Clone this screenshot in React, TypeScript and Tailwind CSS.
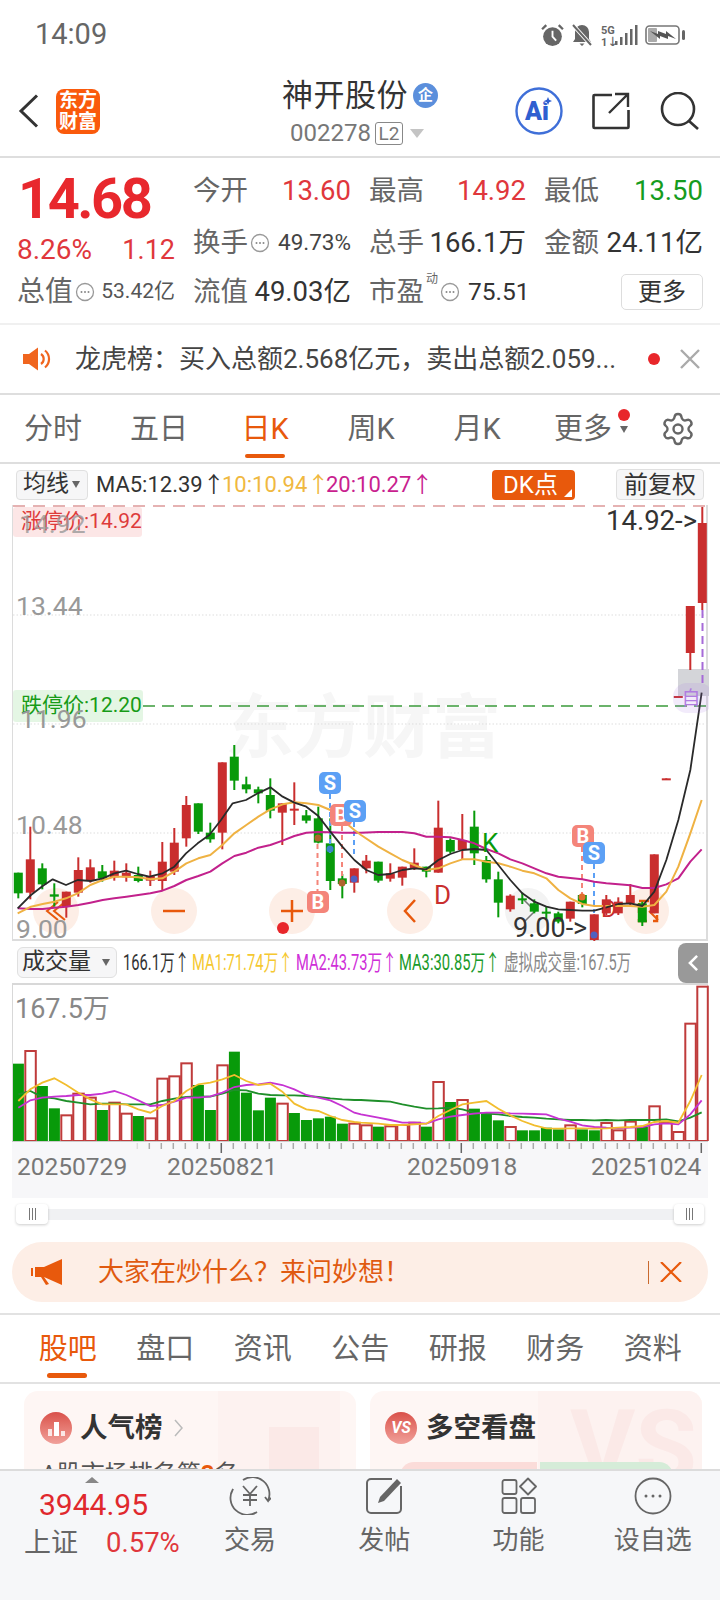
import { Settings } from "lucide-react";

type Candle = [number, number, number, number, number];

const RED = "#c92e2e";
const GREEN = "#089a0a";

// [up?, bodyTop, bodyBottom, wickTop, wickBottom], y measured from 650 at 3x
const candles: Candle[] = [
  [0, 668, 730, 668, 745], [1, 628, 728, 530, 748], [0, 655, 703, 640, 718], [0, 733, 740, 700, 770],
  [1, 725, 770, 725, 803], [1, 660, 728, 622, 740], [1, 652, 690, 628, 698], [0, 664, 685, 645, 695],
  [1, 662, 682, 632, 692], [1, 668, 682, 640, 695], [0, 675, 693, 650, 697], [1, 678, 692, 662, 708],
  [1, 635, 693, 576, 720], [1, 578, 665, 534, 675], [1, 465, 565, 438, 590], [0, 460, 545, 460, 552],
  [0, 548, 568, 518, 578], [1, 337, 548, 337, 598], [0, 320, 392, 285, 420], [0, 403, 418, 380, 430],
  [0, 418, 430, 410, 460], [0, 435, 482, 385, 505], [1, 460, 488, 460, 585], [1, 476, 480, 397, 525],
  [0, 496, 512, 480, 520], [0, 505, 578, 470, 580], [0, 580, 693, 505, 720], [0, 685, 702, 672, 745],
  [1, 655, 698, 655, 728], [1, 632, 655, 615, 670], [0, 635, 692, 635, 698], [1, 670, 686, 640, 695],
  [1, 650, 683, 650, 707], [1, 638, 655, 595, 660], [0, 650, 665, 650, 682], [1, 533, 668, 452, 668],
  [0, 570, 605, 565, 610], [1, 570, 600, 492, 628], [0, 530, 610, 482, 645], [0, 630, 688, 618, 698],
  [0, 688, 758, 665, 802], [1, 737, 778, 733, 785], [0, 745, 748, 728, 762], [0, 760, 785, 748, 790],
  [0, 785, 788, 770, 810], [0, 790, 815, 785, 820], [1, 755, 806, 755, 815], [0, 735, 762, 735, 772],
  [1, 793, 870, 793, 875], [1, 748, 790, 735, 795], [1, 755, 790, 742, 795], [1, 735, 760, 702, 770],
  [0, 760, 817, 755, 828], [1, 613, 790, 613, 790], [1, 385, 390, 385, 390], [1, 138, 142, 138, 142],
  [1, -132, 9, -132, 60], [1, -381, -141, -429, -120],
];

const ma5 = "50,775 90,735 125,708 155,688 195,705 230,690 270,693 305,685 340,670 375,662 410,672 445,680 485,670 520,650 555,610 590,580 625,555 660,510 695,460 735,450 770,430 808,412 845,440 880,458 916,470 952,498 988,545 1024,590 1060,630 1096,660 1132,675 1168,672 1204,660 1240,655 1276,658 1312,630 1348,612 1384,600 1420,597 1456,600 1492,645 1528,690 1564,730 1600,755 1636,770 1672,778 1708,780 1744,782 1780,782 1816,772 1852,762 1888,760 1924,768 1960,725 1996,630 2032,510 2068,360 2102,128";
const ma10 = "50,790 90,770 125,762 160,755 195,745 230,730 268,705 305,690 340,680 375,680 412,682 448,688 484,685 520,665 556,640 592,625 628,615 664,585 700,550 736,525 772,500 808,478 845,463 880,457 916,460 952,465 988,480 1024,510 1060,540 1080,555 1132,590 1168,610 1204,630 1240,645 1276,660 1312,655 1348,640 1384,628 1420,628 1456,635 1492,640 1528,650 1564,662 1600,670 1636,685 1672,720 1708,745 1744,762 1780,768 1816,768 1852,768 1888,768 1924,770 1960,765 1996,725 2032,650 2068,550 2102,450";
const ma20 = "50,775 90,777 125,777 160,773 195,770 232,765 268,758 305,750 340,745 376,740 412,735 448,730 484,722 520,708 556,690 592,678 628,665 664,640 700,618 736,608 772,593 808,585 845,572 880,558 916,548 952,546 988,547 1024,548 1060,548 1080,548 1132,546 1168,546 1204,546 1240,550 1276,560 1312,560 1348,562 1384,570 1420,580 1456,597 1492,610 1528,628 1564,640 1600,655 1636,670 1672,680 1708,684 1744,688 1780,695 1816,700 1852,703 1888,706 1924,714 1960,714 1996,703 2032,685 2068,635 2102,598";

const vol = [
  [0, 368], [1, 330], [0, 435], [0, 502], [1, 523], [1, 458], [1, 470], [0, 507], [1, 485], [1, 518],
  [0, 525], [1, 532], [1, 413], [1, 406], [1, 367], [0, 432], [0, 507], [1, 373], [0, 332], [0, 455],
  [0, 508], [0, 470], [1, 488], [0, 516], [0, 537], [0, 532], [0, 527], [0, 548], [1, 548], [1, 553],
  [0, 557], [1, 556], [1, 552], [1, 545], [0, 557], [1, 423], [0, 483], [1, 477], [0, 503], [0, 518],
  [0, 538], [1, 558], [0, 568], [0, 568], [0, 560], [0, 565], [1, 553], [0, 565], [0, 568], [1, 546],
  [1, 568], [1, 542], [0, 557], [1, 496], [1, 545], [1, 573], [1, 248], [1, 137],
];

const vma1 = "52,480 88,445 124,425 160,412 196,432 232,455 268,475 304,490 340,490 376,490 412,505 448,515 484,495 520,480 556,450 592,430 628,425 664,415 700,402 736,420 772,432 808,428 844,452 880,488 916,505 952,510 988,525 1024,537 1060,543 1080,545 1132,548 1168,552 1204,552 1240,550 1276,548 1312,525 1348,507 1384,490 1420,485 1456,480 1492,503 1528,523 1564,540 1600,553 1636,562 1672,563 1708,562 1744,562 1780,563 1816,562 1852,560 1888,558 1924,555 1960,543 1996,540 2032,545 2068,480 2102,402";
const vma2 = "52,500 88,478 124,470 160,467 196,465 232,462 268,462 304,458 340,450 376,462 412,478 448,495 484,492 520,482 556,470 592,470 628,466 664,455 700,438 736,432 772,430 808,425 844,432 880,445 916,462 952,470 988,478 1024,495 1060,515 1080,520 1132,530 1168,537 1204,545 1240,545 1276,548 1312,535 1348,527 1384,522 1420,518 1456,515 1492,515 1528,517 1564,518 1600,519 1636,520 1672,533 1708,542 1744,553 1780,558 1816,560 1852,561 1888,560 1924,558 1960,550 1996,547 2032,550 2068,520 2102,478";
const vma3 = "52,460 88,450 124,468 160,472 196,480 232,485 268,490 304,488 340,488 376,490 412,490 448,490 484,480 520,473 556,468 592,466 628,467 664,458 700,447 736,448 772,458 808,462 844,463 880,463 916,465 952,468 988,472 1024,475 1060,477 1080,477 1132,480 1168,482 1204,490 1240,497 1276,503 1312,502 1348,500 1384,505 1420,515 1456,518 1492,520 1528,525 1564,528 1600,530 1636,533 1672,535 1708,537 1744,537 1780,538 1816,537 1852,538 1888,537 1924,537 1960,537 1996,535 2032,541 2068,530 2102,514";

const Marker = ({ x, y, t, c }: { x: number; y: number; t: string; c: string }) => (
  <g>
    <rect x={x} y={y} width="22" height="22" rx="5" fill={c} />
    <text x={x + 11} y={y + 18} textAnchor="middle" fontSize="20" fontWeight="700" fill="#fff">{t}</text>
  </g>
);

const Dots = () => (
  <svg viewBox="0 0 20 20" className="w-[20px] h-[20px] shrink-0">
    <circle cx="10" cy="10" r="8.5" fill="none" stroke="#999" strokeWidth="1.3" />
    <circle cx="6.5" cy="10" r="1" fill="#888" />
    <circle cx="10" cy="10" r="1" fill="#888" />
    <circle cx="13.5" cy="10" r="1" fill="#888" />
  </svg>
);

function PriceChart() {
  const toX = (x: number) => x / 3;
  const toY = (y: number) => 650 + y / 3;
  const pts = (s: string) =>
    s.split(" ").map((p) => {
      const [a, b] = p.split(",").map(Number);
      return `${toX(a)},${toY(b)}`;
    }).join(" ");
  return (
    <div className="relative shrink-0 h-[436px] ml-[12px] w-[696px] border-l border-r-2 border-b-2 border-[#dcdcdc]">
      <svg viewBox="12 505 696 436" className="absolute inset-0 w-[696px] h-[436px]">
        <text x="224" y="752" fontSize="69" fontWeight="700" fill="#f6f6f6">东方财富</text>
        <line x1="12" x2="708" y1="506" y2="506" stroke="#d99" strokeWidth="1.5" strokeDasharray="12 8" />
        {[615, 724, 833].map((y) => (
          <line key={y} x1="12" x2="708" y1={y} y2={y} stroke="#ddd" strokeDasharray="1.5 2" />
        ))}
        <line x1="142" x2="708" y1="706" y2="706" stroke="#3b9a3b" strokeWidth="1.5" strokeDasharray="12 7" />

        {[55, 173, 291, 409, 645].map((x) => (
          <circle key={x} cx={x} cy="911" r="23" fill="#fdeee6" />
        ))}
        <circle cx="527" cy="911" r="23" fill="#f3f3f3" />
        <path d="M57 902l-11 9 11 9M64 902l-11 9 11 9" fill="none" stroke="#e8590c" strokeWidth="2" />
        <path d="M162 911h22" stroke="#e8590c" strokeWidth="2.5" />
        <path d="M280 911h22M291 900v22" stroke="#e8590c" strokeWidth="2.5" />
        <path d="M414 900l-10 11 10 11" fill="none" stroke="#e8590c" strokeWidth="2.5" />
        <path d="M523 900l11 11-11 11" fill="none" stroke="#777" strokeWidth="1.5" />
        <rect x="638" y="901" width="18" height="20" fill="none" stroke="#e8590c" strokeWidth="2.5" strokeDasharray="10 6" />
        <path d="M648 911l9 9" stroke="#e8590c" strokeWidth="2" />

        <rect x="677" y="669" width="31" height="27" fill="#d4d5d9" />

        {candles.map(([up, bt, bb, wt, wb], i) => {
          const x = 17.3 + 12 * i;
          const c = up ? RED : GREEN;
          const h = Math.max((bb - bt) / 3, 2);
          return (
            <g key={i}>
              <line x1={x} x2={x} y1={toY(wt)} y2={toY(wb)} stroke={c} strokeWidth="2" />
              <rect x={x - 4.5} y={toY(bt)} width="9" height={h} fill={c} />
            </g>
          );
        })}

        <path d="M316.5 844v47M341 826v52" stroke="#f4857a" strokeWidth="2" strokeDasharray="5 4" />
        <path d="M329 794v62M353 822v34" stroke="#5ca0f5" strokeWidth="2" strokeDasharray="5 4" />
        <path d="M581 847v49" stroke="#f4857a" strokeWidth="2" strokeDasharray="5 4" />
        <path d="M593 864v49" stroke="#5ca0f5" strokeWidth="2" strokeDasharray="5 4" />
        <path d="M701.5 610v75" stroke="#a66ad8" strokeWidth="2" strokeDasharray="8 5" />

        <polyline points={pts(ma20)} fill="none" stroke="#c2218c" strokeWidth="2" strokeLinejoin="round" />
        <polyline points={pts(ma10)} fill="none" stroke="#efb243" strokeWidth="2" strokeLinejoin="round" />
        <polyline points={pts(ma5)} fill="none" stroke="#2a2a2a" strokeWidth="1.8" strokeLinejoin="round" />

        <circle cx="317" cy="838" r="3.5" fill="#b0622e" />
        <circle cx="329" cy="849" r="3.5" fill="#3a86c8" />
        <circle cx="341" cy="883" r="3.5" fill="#b0622e" />
        <circle cx="353" cy="879" r="3.5" fill="#5060c0" />
        <circle cx="581" cy="897" r="3.5" fill="#e0702e" />
        <circle cx="593" cy="935" r="3.5" fill="#5060c0" />
        <circle cx="282" cy="928" r="6" fill="#e8262a" />

        <Marker x={306} y={891} t="B" c="#f4857a" />
        <Marker x={329} y={804} t="B" c="#f4857a" />
        <Marker x={318} y={772} t="S" c="#5ca0f5" />
        <Marker x={343} y={800} t="S" c="#5ca0f5" />
        <Marker x={571} y={825} t="B" c="#f4857a" />
        <Marker x={582} y={842} t="S" c="#5ca0f5" />

        <text x="433" y="904" fontSize="26" fill="#c92e2e">D</text>
        <text x="600" y="917" fontSize="24" fill="#c92e2e">D</text>
        <text x="481" y="852" fontSize="26" fill="#089a0a">K</text>
        <text x="512" y="937" fontSize="27" fill="#333">9.00-&gt;</text>
        <text x="605" y="530" fontSize="27.5" fill="#333">14.92-&gt;</text>

        <rect x="672" y="683" width="40" height="30" rx="14" fill="#a070e0" fillOpacity="0.14" />
        <text x="690" y="705" textAnchor="middle" fontSize="19" fill="#b07be0">自</text>
      </svg>

      <div className="absolute left-0 top-[2px] w-[129px] h-[30px] rounded-[3px] bg-[#fbdcdc]/70 flex items-center pl-[8px] text-[21px] text-[#de3b3b] whitespace-nowrap">涨停价:14.92</div>
      <div className="absolute left-0 top-[185px] w-[130px] h-[32px] rounded-[3px] bg-[#d8f2d8]/70 flex items-center pl-[8px] text-[21px] text-[#179b17] whitespace-nowrap">跌停价:12.20</div>

      <span className="absolute left-[3px] top-[85px] text-[26.5px] leading-[32px] text-[#999]">13.44</span>
      <span className="absolute left-[3px] top-[304px] text-[26.5px] leading-[32px] text-[#999]">10.48</span>
      <span className="absolute left-[3px] top-[408px] text-[26.5px] leading-[32px] text-[#999]">9.00</span>
      <span className="absolute left-[7px] top-[198px] text-[26.5px] leading-[32px] text-[#999]">11.96</span>
      <span className="absolute left-[6px] top-[3px] text-[26.5px] leading-[32px] text-[#999]/80">14.92</span>
    </div>
  );
}

function VolumePlot() {
  const toY = (y: number) => 940 + y / 3;
  const pts = (s: string) =>
    s.split(" ").map((p) => {
      const [a, b] = p.split(",").map(Number);
      return `${a / 3},${toY(b)}`;
    }).join(" ");
  return (
    <svg viewBox="12 984 696 156" className="block w-[696px] h-[156px]">
      {vol.map(([up, top], i) => {
        const x = 17.3 + 12 * i;
        const y = toY(top);
        return up ? (
          <rect key={i} x={x - 5} y={y} width="10.5" height={1140 - y} fill="#fff" stroke="#bf3b3b" strokeWidth="2" />
        ) : (
          <rect key={i} x={x - 5.4} y={y} width="11" height={1140 - y} fill={GREEN} />
        );
      })}
      <polyline points={pts(vma3)} fill="none" stroke="#1f8f2a" strokeWidth="1.8" />
      <polyline points={pts(vma2)} fill="none" stroke="#c633d2" strokeWidth="1.8" />
      <polyline points={pts(vma1)} fill="none" stroke="#f2bd2e" strokeWidth="1.8" />
    </svg>
  );
}

export default function App() {
  return (
    <div className="w-[720px] h-[1600px] bg-white flex flex-col overflow-hidden [font-family:Roboto,'Noto_Sans_CJK_SC',sans-serif]">
      {/* status bar */}
      <div className="h-[68px] shrink-0 flex items-center pl-[35px] pr-[34px] pt-[2px] text-[#666]">
        <span className="text-[29px]">14:09</span>
        <div className="ml-auto flex items-center">
          <svg viewBox="0 0 24 24" className="w-[25px] h-[25px]">
            <circle cx="12" cy="13" r="9" fill="#666" />
            <path d="M12 7.5V13l3.5 4" stroke="#fff" strokeWidth="1.8" fill="none" />
            <path d="M2 6l4-4M22 6l-4-4" stroke="#666" strokeWidth="2.2" />
          </svg>
          <svg viewBox="0 0 24 24" className="w-[24px] h-[24px] ml-[5px]">
            <path d="M12 2a7 7 0 0 0-7 7v7l-2 3h18l-2-3V9a7 7 0 0 0-7-7zM9.5 20.5h5L12 23z" fill="#666" />
            <path d="M3 2l18 20" stroke="#fff" strokeWidth="4" />
            <path d="M3 2l18 20" stroke="#666" strokeWidth="2" />
          </svg>
          <svg viewBox="0 0 37 22" className="w-[37px] h-[22px] ml-[7px]">
            <text x="0" y="9.5" fontSize="11" fontWeight="700" fill="#666">5G</text>
            <text x="0" y="21.5" fontSize="11" fontWeight="700" fill="#666">1↓</text>
            <rect x="14" y="17" width="2.5" height="4" fill="#666" />
            <rect x="19" y="13" width="2.5" height="8" fill="#666" />
            <rect x="24" y="9" width="2.5" height="12" fill="#666" />
            <rect x="29" y="5" width="2.5" height="16" fill="#666" />
            <rect x="34" y="1" width="2.5" height="20" fill="#666" />
          </svg>
          <svg viewBox="0 0 41 20" className="w-[41px] h-[20px] ml-[7px]">
            <rect x="1" y="1" width="33" height="18" rx="3.5" fill="none" stroke="#777" strokeWidth="1.6" />
            <rect x="3" y="3" width="9" height="14" rx="1" fill="#aaa" />
            <path d="M5 6l8 3 0-3 8 3 0-3 10 8-8-3 0 3-8-3 0 3z" fill="#555" />
            <rect x="37" y="5" width="3" height="10" rx="1.5" fill="#666" />
          </svg>
        </div>
      </div>

      {/* header */}
      <div className="h-[90px] shrink-0 border-b-2 border-[#dedede] flex items-center pb-[2px]">
        <div className="w-[282px] shrink-0 flex items-center pl-[18px]">
          <svg viewBox="0 0 21 34" className="w-[21px] h-[34px]">
            <path d="M19 1.5L3 17l16 15.5" fill="none" stroke="#333" strokeWidth="3" />
          </svg>
          <div className="ml-[17px] w-[44px] h-[45px] rounded-[8px] bg-[#fa5a0c] text-white text-[19px] leading-[21px] font-bold flex flex-col items-center justify-center">
            <span>东方</span>
            <span>财富</span>
          </div>
        </div>
        <div className="w-[200px] shrink-0 flex flex-col">
          <div className="flex items-center h-[42px]">
            <span className="text-[31px] leading-none text-[#333] tracking-[0.5px]">神开股份</span>
            <span className="ml-[5px] w-[25px] h-[25px] rounded-full bg-[#5b8fdc] text-white text-[15px] font-bold flex items-center justify-center">企</span>
          </div>
          <div className="flex items-center h-[30px] pl-[8px] mt-[2px]">
            <span className="text-[24px] leading-none text-[#777]">002278</span>
            <span className="ml-[4px] w-[28px] h-[23px] rounded-[3px] border border-[#888] text-[19px] leading-none text-[#777] flex items-center justify-center">L2</span>
            <span className="ml-[7px] w-0 h-0 border-x-[7px] border-x-transparent border-t-[9px] border-t-[#c4c4c4]" />
          </div>
        </div>
        <div className="ml-[33px] flex items-center">
          <svg viewBox="0 0 48 48" className="w-[48px] h-[48px]">
            <circle cx="24" cy="24" r="22.5" fill="none" stroke="#3f6fd8" strokeWidth="2.4" />
            <text x="10" y="33" fontSize="25" fontWeight="900" fill="#2f5fd0">Ai</text>
            <path d="M33 11l1.200 2.800L37 15l-2.800 1.200L33 19l-1.200-2.800L29 15l2.800-1.200z" fill="#fff" />
            <path d="M33 10l1.200 2.800L37 14l-2.800 1.200L33 18l-1.200-2.800L29 14l2.800-1.200z" fill="#2f5fd0" />
          </svg>
          <svg viewBox="0 0 38 38" className="w-[38px] h-[38px] ml-[29px]">
            <path d="M20 3H2.500a1 1 0 0 0-1 1v31a1 1 0 0 0 1 1h33a1 1 0 0 0 1-1V18" fill="none" stroke="#333" strokeWidth="2.6" strokeLinejoin="round" />
            <path d="M17 21L35 3M23 2h13v13" fill="none" stroke="#333" strokeWidth="2.4" />
          </svg>
          <svg viewBox="0 0 40 38" className="w-[40px] h-[38px] ml-[30px]">
            <circle cx="18" cy="17" r="16" fill="none" stroke="#333" strokeWidth="2.6" />
            <path d="M29 29l9 8" stroke="#333" strokeWidth="2.6" />
          </svg>
        </div>
      </div>

      {/* quote */}
      <div className="h-[167px] shrink-0 border-b-2 border-[#f0f0f0] flex pt-[5px]">
        <div className="w-[193px] shrink-0 pl-[17px]">
          <div className="h-[72px] flex items-center">
            <span className="text-[56px] leading-none font-bold text-[#e8282d] ml-[1px] tracking-[-2.5px]">14.68</span>
          </div>
          <div className="h-[30px] w-[158px] flex items-center justify-between text-[28px] text-[#e0373c]">
            <span>8.26%</span>
            <span className="text-[27px]">1.12</span>
          </div>
          <div className="h-[54px] w-[158px] flex items-center">
            <span className="text-[28px] text-[#666]">总值</span>
            <span className="ml-[2px]"><Dots /></span>
            <span className="ml-auto text-[21px] text-[#555]">53.42亿</span>
          </div>
        </div>
        <div className="grid grid-cols-[158px_157px_159px] gap-x-[18px] grid-rows-[56px_48px_50px] text-[27.5px] text-[#666] whitespace-nowrap">
          <div className="flex items-center justify-between"><span>今开</span><span className="text-[#e0373c]">13.60</span></div>
          <div className="flex items-center justify-between"><span>最高</span><span className="text-[#e0373c]">14.92</span></div>
          <div className="flex items-center justify-between"><span>最低</span><span className="text-[#169c1e]">13.50</span></div>

          <div className="flex items-center"><span>换手</span><span className="ml-[2px]"><Dots /></span><span className="ml-auto text-[22.5px] text-[#444]">49.73%</span></div>
          <div className="flex items-center justify-between"><span>总手</span><span className="text-[#333]">166.1万</span></div>
          <div className="flex items-center justify-between"><span>金额</span><span className="text-[#333]">24.11亿</span></div>

          <div className="flex items-center justify-between"><span>流值</span><span className="text-[#333]">49.03亿</span></div>
          <div className="flex items-center">
            <span className="shrink-0">市盈</span>
            <span className="text-[12px] mb-[26px] ml-[2px] leading-none">动</span>
            <span className="ml-[2px]"><Dots /></span>
            <span className="ml-[8px] text-[24.5px] text-[#333]">75.51</span>
          </div>
          <div className="flex items-center justify-end">
            <span className="w-[82px] h-[36px] rounded-[5px] border border-[#ddd] text-[24px] text-[#333] flex items-center justify-center">更多</span>
          </div>
        </div>
      </div>

      {/* notice */}
      <div className="h-[70px] shrink-0 border-b-2 border-[#dedede] flex items-center pl-[23px]">
        <svg viewBox="0 0 28 24" className="w-[28px] h-[24px]">
          <path d="M0 7h6l9-6.500v23L6 17H0z" fill="#f0651e" />
          <path d="M18 7a6 6 0 0 1 0 10" fill="none" stroke="#f0651e" strokeWidth="2.200" />
          <path d="M22 3.500a11 11 0 0 1 0 17" fill="none" stroke="#f0651e" strokeWidth="2.200" />
        </svg>
        <span className="ml-[24px] w-[540px] text-[26px] text-[#444] whitespace-nowrap">龙虎榜：买入总额2.568亿元，卖出总额2.059...</span>
        <span className="ml-[33px] w-[12px] h-[12px] rounded-full bg-[#e8262a]" />
        <svg viewBox="0 0 20 20" className="w-[20px] h-[20px] ml-[20px]">
          <path d="M1 1l18 18M19 1L1 19" stroke="#aaa" strokeWidth="2.400" />
        </svg>
      </div>

      {/* period tabs */}
      <div className="h-[69px] shrink-0 border-b-2 border-[#dedede] flex text-[29px] text-[#666]">
        <div className="w-[106px] flex items-center justify-center pt-[3px]">分时</div>
        <div className="w-[106px] flex items-center justify-center pt-[3px]">五日</div>
        <div className="relative w-[106px] flex items-center justify-center pt-[3px] text-[#e8590c]">
          日K
          <span className="absolute left-[33px] bottom-[4px] w-[40px] h-[4px] rounded-full bg-[#e8590c]" />
        </div>
        <div className="w-[106px] flex items-center justify-center pt-[3px]">周K</div>
        <div className="w-[106px] flex items-center justify-center pt-[3px]">月K</div>
        <div className="relative w-[106px] flex items-center justify-center pt-[3px]">
          更多
          <span className="absolute left-[88px] top-[14px] w-[12px] h-[12px] rounded-full bg-[#e8262a]" />
          <span className="absolute left-[90px] top-[31px] w-0 h-0 border-x-[4px] border-x-transparent border-t-[7px] border-t-[#666]" />
        </div>
        <div className="flex-1 flex items-center justify-center">
          <Settings size={36} strokeWidth={1.6} color="#666" />
        </div>
      </div>

      {/* chart toolbar */}
      <div className="h-[41px] shrink-0 flex items-center pl-[16px] pr-[16px] text-[22px]">
        <div className="w-[72px] h-[30px] rounded-[4px] bg-[#f6f6f7] border border-[#e0e0e0] flex items-center pl-[6px] text-[#333] text-[23px]">
          均线
          <span className="ml-[3px] w-0 h-0 border-x-[4.5px] border-x-transparent border-t-[7px] border-t-[#666]" />
        </div>
        <span className="ml-[8px] w-[126px] text-[#333] whitespace-nowrap">MA5:12.39↑</span>
        <span className="w-[104px] text-[#f0b840] whitespace-nowrap">10:10.94↑</span>
        <span className="w-[166px] text-[#c91f8f] whitespace-nowrap">20:10.27↑</span>
        <div className="relative w-[83px] h-[30px] rounded-[4px] bg-[#e8590c] text-white text-[24px] flex items-center justify-center pr-[6px]">
          DK点
          <span className="absolute right-[3px] bottom-[3px] w-0 h-0 border-l-[8px] border-l-transparent border-b-[8px] border-b-white" />
        </div>
        <div className="ml-auto w-[88px] h-[31px] rounded-[4px] bg-[#f6f6f7] border border-[#e0e0e0] text-[24px] text-[#333] flex items-center justify-center">前复权</div>
      </div>

      <PriceChart />

      {/* volume toolbar */}
      <div className="h-[43px] shrink-0 flex items-center pl-[17px] pr-[12px] text-[22px] whitespace-nowrap">
        <div className="shrink-0 w-[100px] h-[31px] rounded-[6px] bg-[#f6f6f7] border border-[#e0e0e0] flex items-center pl-[4px] text-[23px] text-[#333]">
          成交量
          <span className="ml-[11px] w-0 h-0 border-x-[4.500px] border-x-transparent border-t-[7px] border-t-[#666]" />
        </div>
        <div className="shrink-0 ml-[6px] w-[69px]"><span className="block w-[100px] origin-left scale-x-[0.67] text-[#333]">166.1万↑</span></div>
        <div className="shrink-0 w-[104px]"><span className="block w-[150px] origin-left scale-x-[0.67] text-[#f5c830]">MA1:71.74万↑</span></div>
        <div className="shrink-0 w-[103px]"><span className="block w-[150px] origin-left scale-x-[0.67] text-[#cf2fd8]">MA2:43.73万↑</span></div>
        <div className="shrink-0 w-[105px]"><span className="block w-[150px] origin-left scale-x-[0.67] text-[#1a9a2a]">MA3:30.85万↑</span></div>
        <div className="shrink-0 w-[126px]"><span className="block w-[190px] origin-left scale-x-[0.66] text-[#888]">虚拟成交量:167.5万</span></div>
        <div className="shrink-0 ml-auto w-[30px] h-[40px] rounded-l-[8px] bg-[#999] flex items-center justify-center">
          <svg viewBox="0 0 12 20" className="w-[11px] h-[18px]">
            <path d="M10 2L2 10l8 8" fill="none" stroke="#fff" strokeWidth="2.800" />
          </svg>
        </div>
      </div>

      {/* volume chart */}
      <div className="ml-[12px] w-[696px] shrink-0">
        <div className="relative h-[156px] border-t-2 border-x border-[#d8d8d8] box-content -mt-[1px] w-[694px]">
          <VolumePlot />
          <span className="absolute left-[2px] top-[8px] text-[27px] leading-[32px] text-[#888]">167.5万</span>
        </div>
        <div className="relative h-[57px] bg-[#f7f7f9] border-t border-[#ccc]">
          <svg viewBox="12 1141 696 14" className="block w-[696px] h-[14px]">
            {Array.from({ length: 82 - 28 }, (_, i) => {
              const x = 137.3 + 12 * i;
              const long = Math.abs(x - 221.3) < 1 || Math.abs(x - 461.3) < 1 || Math.abs(x - 701.3) < 1;
              if (x > 705) return null;
              return (
                <line key={i} x1={x} x2={x} y1="1142" y2={long ? 1152 : 1148} stroke={long ? "#666" : i < 1 ? "#ddd" : "#aaa"} strokeWidth="1.500" />
              );
            })}
          </svg>
          <span className="absolute left-[5px] top-[10px] text-[24.500px] leading-[30px] text-[#777]">20250729</span>
          <span className="absolute left-[155px] top-[10px] text-[24.500px] leading-[30px] text-[#777]">20250821</span>
          <span className="absolute left-[395px] top-[10px] text-[24.500px] leading-[30px] text-[#777]">20250918</span>
          <span className="absolute left-[579px] top-[10px] text-[24.500px] leading-[30px] text-[#777]">20251024</span>
        </div>
      </div>

      {/* range slider */}
      <div className="relative shrink-0 mt-[6px] ml-[16px] w-[688px] h-[20px] flex justify-between">
        <div className="absolute inset-x-0 top-[5px] h-[11px] bg-[#f0f1f3]" />
        <div className="relative w-[32px] h-[20px] rounded-[4px] bg-white shadow-[0_1px_3px_rgba(0,0,0,0.2)] flex items-center justify-center gap-[2px]">
          <span className="w-px h-[12px] bg-[#777]" /><span className="w-px h-[12px] bg-[#777]" /><span className="w-px h-[12px] bg-[#777]" />
        </div>
        <div className="relative w-[30px] h-[20px] rounded-[4px] bg-white shadow-[0_1px_3px_rgba(0,0,0,0.2)] flex items-center justify-center gap-[2px]">
          <span className="w-px h-[12px] bg-[#777]" /><span className="w-px h-[12px] bg-[#777]" /><span className="w-px h-[12px] bg-[#777]" />
        </div>
      </div>

      {/* ask banner */}
      <div className="shrink-0 mt-[18px] ml-[12px] w-[696px] h-[60px] rounded-full bg-[#fdeee6] flex items-center pl-[19px] text-[#e05a10]">
        <svg viewBox="0 0 31 26" className="w-[31px] h-[26px]">
          <path d="M0 9h2v8H0zM4 8h9L31 0v26L13 18l5 7-3 1-5-8H4z" fill="#e8590c" />
        </svg>
        <span className="ml-[36px] w-[550px] text-[26px] whitespace-nowrap">大家在炒什么？来问妙想！</span>
        <span className="w-px h-[23px] bg-[#c9692e]" />
        <svg viewBox="0 0 22 20" className="w-[22px] h-[20px] ml-[11px]">
          <path d="M1 0l20 20M21 0L1 20" stroke="#e8590c" strokeWidth="2.200" />
        </svg>
      </div>

      {/* content tabs */}
      <div className="shrink-0 mt-[11px] h-[71px] border-y-2 border-[#e2e2e2] flex pl-[19px] text-[29px] text-[#666]">
        <div className="relative w-[97.500px] flex items-center justify-center pt-[2px] text-[#e8590c]">
          股吧
          <span className="absolute left-[28px] bottom-[4px] w-[40px] h-[5px] rounded-full bg-[#e8590c]" />
        </div>
        <div className="w-[97.500px] flex items-center justify-center pt-[2px]">盘口</div>
        <div className="w-[97.500px] flex items-center justify-center pt-[2px]">资讯</div>
        <div className="w-[97.500px] flex items-center justify-center pt-[2px]">公告</div>
        <div className="w-[97.500px] flex items-center justify-center pt-[2px]">研报</div>
        <div className="w-[97.500px] flex items-center justify-center pt-[2px]">财务</div>
        <div className="w-[97.500px] flex items-center justify-center pt-[2px]">资料</div>
      </div>

      {/* cards, cut by the bottom bar */}
      <div className="flex-1 overflow-hidden flex gap-[14px] pl-[24px] pt-[7px]">
        <div className="relative w-[332px] h-[120px] rounded-[14px] bg-[#fef6f4] overflow-hidden">
          <div className="absolute left-[194px] top-0 w-[122px] h-full bg-[#fdf2f0]" />
          <div className="absolute left-[245px] top-[36px] w-[50px] h-[60px] bg-[#fbe9e7]" />
          <div className="relative flex items-center pl-[16px] pt-[21px]">
            <div className="w-[32px] h-[32px] rounded-full bg-gradient-to-b from-[#d9504a] to-[#f0a09a] flex items-end justify-center gap-[2px] pb-[8px]">
              <span className="w-[4px] h-[7px] bg-white/80" />
              <span className="w-[5px] h-[14px] bg-white" />
              <span className="w-[4px] h-[5px] bg-white/80" />
            </div>
            <span className="ml-[8px] text-[27.500px] leading-[32px] font-bold text-[#333]">人气榜</span>
            <svg viewBox="0 0 9 18" className="w-[9px] h-[18px] ml-[11px]">
              <path d="M1 1l7 8-7 8" fill="none" stroke="#bbb" strokeWidth="1.500" />
            </svg>
          </div>
          <div className="relative pl-[17px] mt-[15px] text-[24px] leading-[30px] text-[#555] whitespace-nowrap">
            A股市场排名第<span className="text-[#e8590c] font-bold">3</span>名
          </div>
        </div>
        <div className="relative w-[332px] h-[120px] rounded-[14px] bg-[#fef6f4] overflow-hidden">
          <div className="absolute left-[168px] top-0 w-[164px] h-full bg-[#fdf2f0]" />
          <span className="absolute left-[200px] top-[6px] text-[100px] leading-[100px] font-bold text-[#fbe9e7]">VS</span>
          <div className="relative flex items-center pl-[15px] pt-[21px]">
            <div className="w-[32px] h-[32px] rounded-full bg-gradient-to-b from-[#d9504a] to-[#f0a09a] text-white text-[16px] font-bold italic flex items-center justify-center">VS</div>
            <span className="ml-[9px] text-[27.500px] leading-[32px] font-bold text-[#333]">多空看盘</span>
          </div>
          <div className="relative ml-[30px] mt-[18px] w-[273px] h-[30px] flex rounded-t-[14px] overflow-hidden">
            <div className="w-1/2 bg-[#fbdcd9]" />
            <div className="ml-[3px] flex-1 bg-[#d5ecd8]" />
          </div>
        </div>
      </div>

      {/* bottom bar */}
      <div className="relative z-10 h-[131px] shrink-0 bg-[#f6f7f9] border-t-2 border-[#dcdcdc] flex">
        <div className="relative w-[183px] shrink-0 pl-[24px]">
          <span className="absolute left-[85px] top-[6px] w-0 h-0 border-x-[7px] border-x-transparent border-b-[6px] border-b-[#888]" />
          <div className="pl-[15px] pt-[16px] text-[30px] leading-[36px] text-[#e0282d]">3944.95</div>
          <div className="flex items-center mt-[2px]">
            <span className="text-[27px] leading-[36px] text-[#666]">上证</span>
            <span className="ml-[28px] text-[27.500px] leading-[36px] text-[#e0373c]">0.57%</span>
          </div>
        </div>
        <div className="w-[134.500px] flex flex-col items-center pt-[6px]">
          <svg viewBox="0 0 42 38" className="w-[42px] h-[38px]">
            <path d="M14 3a17 17 0 0 1 25 21l-3-4M28 35A17 17 0 0 1 4 12l-2 5" fill="none" stroke="#666" strokeWidth="1.800" />
            <path d="M39 24l3-3" stroke="#666" strokeWidth="1.800" />
            <path d="M14 9l7 8 7-8M21 17v12M14 18h14M14 23h14" fill="none" stroke="#666" strokeWidth="1.800" />
          </svg>
          <span className="text-[26px] leading-[32px] mt-[9px] text-[#666]">交易</span>
        </div>
        <div className="w-[134.500px] flex flex-col items-center pt-[6px]">
          <svg viewBox="0 0 38 38" className="w-[38px] h-[38px]">
            <path d="M27 2H6a4 4 0 0 0-4 4v26a4 4 0 0 0 4 4h26a4 4 0 0 0 4-4V9" fill="none" stroke="#666" strokeWidth="2" />
            <path d="M13 26l2-6L32 2l4 4-17 18z" fill="#666" />
          </svg>
          <span className="text-[26px] leading-[32px] mt-[9px] text-[#666]">发帖</span>
        </div>
        <div className="w-[134.500px] flex flex-col items-center pt-[6px]">
          <svg viewBox="0 0 36 38" className="w-[36px] h-[38px]">
            <rect x="1.500" y="3" width="14" height="14" rx="2" fill="none" stroke="#666" strokeWidth="1.800" />
            <rect x="1.500" y="21" width="14" height="15" rx="2" fill="none" stroke="#666" strokeWidth="1.800" />
            <rect x="20" y="21" width="14" height="15" rx="2" fill="none" stroke="#666" strokeWidth="1.800" />
            <path d="M27 1.500l8 8-8 8-8-8z" fill="none" stroke="#666" strokeWidth="1.800" strokeLinejoin="round" />
          </svg>
          <span className="text-[26px] leading-[32px] mt-[9px] text-[#666]">功能</span>
        </div>
        <div className="w-[134.500px] flex flex-col items-center pt-[6px]">
          <svg viewBox="0 0 38 38" className="w-[38px] h-[38px]">
            <circle cx="19" cy="19" r="17.500" fill="none" stroke="#666" strokeWidth="1.800" />
            <circle cx="12" cy="19" r="1.500" fill="#666" />
            <circle cx="19" cy="19" r="1.500" fill="#666" />
            <circle cx="26" cy="19" r="1.500" fill="#666" />
          </svg>
          <span className="text-[26px] leading-[32px] mt-[9px] text-[#666]">设自选</span>
        </div>
      </div>
    </div>
  );
}
